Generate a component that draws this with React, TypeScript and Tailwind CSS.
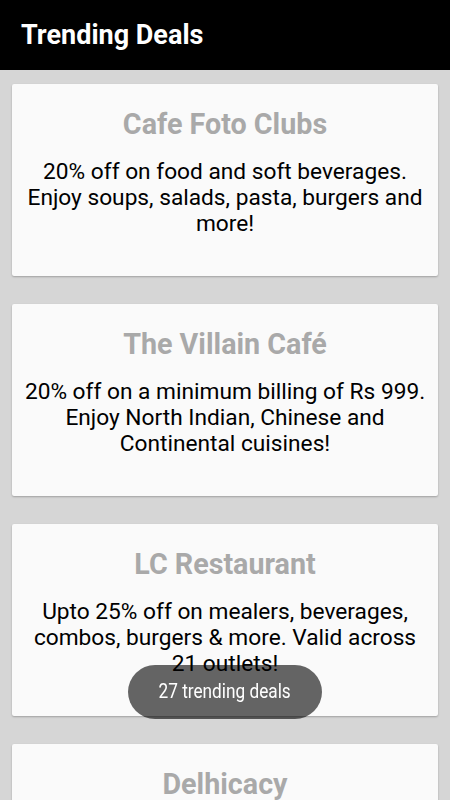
import React from 'react';

interface Deal {
  name: string;
  offer: string;
}

const deals: Deal[] = [
  { name: 'Cafe Foto Clubs', offer: '20% off on food and soft beverages. Enjoy soups, salads, pasta, burgers and more!' },
  { name: 'The Villain Café', offer: '20% off on a minimum billing of Rs 999. Enjoy North Indian, Chinese and Continental cuisines!' },
  { name: 'LC Restaurant', offer: 'Upto 25% off on mealers, beverages, combos, burgers & more. Valid across 21 outlets!' },
  { name: 'Delhicacy', offer: '15% off on the total bill. Enjoy Mughlai, North Indian and more!' },
];

const DealCard = ({ deal }: { deal: Deal }) => (
  <div className="mx-3 h-[192px] rounded-[2px] bg-[#fafafa] shadow-[0_1px_2px_rgba(0,0,0,0.25)] px-3 pt-[23px] text-center">
    <h2 className="text-[28.7px] leading-[34px] font-bold text-[#a9a9a9]">{deal.name}</h2>
    <p className="mt-[18px] text-[22.7px] leading-[26px] text-black">{deal.offer}</p>
  </div>
);

export default function App() {
  return (
    <div className="min-h-screen bg-[#d6d6d6] font-['Roboto',sans-serif]">
      <header className="h-[70px] bg-black flex items-center px-[21px]">
        <h1 className="text-[27px] font-bold text-white">Trending Deals</h1>
      </header>

      <div className="flex flex-col gap-[28px] pt-[14px] pb-6">
        {deals.map((deal) => (
          <DealCard key={deal.name} deal={deal} />
        ))}
      </div>

      <div className="fixed bottom-[81px] left-1/2 -translate-x-1/2 h-[54px] w-[194px] rounded-full bg-black/60 flex items-center justify-center">
        <span className="inline-block scale-x-[0.82] text-[21px] text-white whitespace-nowrap">27 trending deals</span>
      </div>
    </div>
  );
}
